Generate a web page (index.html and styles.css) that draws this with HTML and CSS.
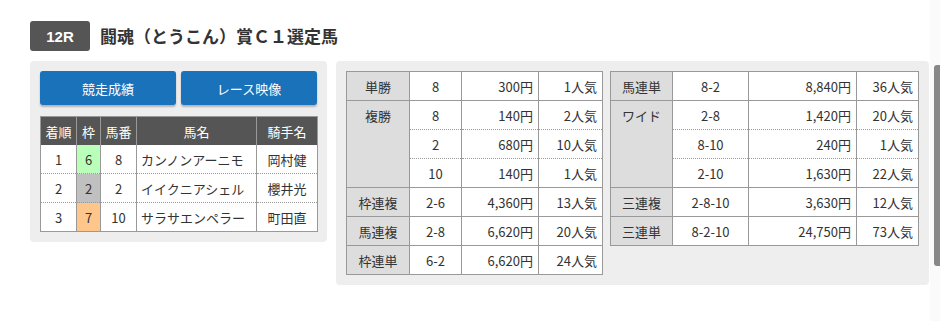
FILE: index.html
```html
<!DOCTYPE html>
<html lang="ja">
<head>
<meta charset="utf-8">
<link rel="stylesheet" href="styles.css">
</head>
<body>
<div class="page">
  <div class="race-head">
    <span class="race-no">12R</span>
    <h1 class="race-title">闘魂（とうこん）賞Ｃ１選定馬</h1>
  </div>
  <div class="panels">
    <section class="panel panel-left">
      <div class="btns">
        <a class="btn">競走成績</a>
        <a class="btn">レース映像</a>
      </div>
      <table class="result">
        <colgroup><col class="c1"><col class="c2"><col class="c3"><col class="c4"><col class="c5"></colgroup>
        <thead>
          <tr><th>着順</th><th>枠</th><th>馬番</th><th>馬名</th><th>騎手名</th></tr>
        </thead>
        <tbody>
          <tr><td class="ctr">1</td><td class="ctr w6">6</td><td class="ctr">8</td><td class="name">カンノンアーニモ</td><td class="ctr">岡村健</td></tr>
          <tr><td class="ctr">2</td><td class="ctr w2">2</td><td class="ctr">2</td><td class="name">イイクニアシェル</td><td class="ctr">櫻井光</td></tr>
          <tr><td class="ctr">3</td><td class="ctr w7">7</td><td class="ctr">10</td><td class="name">サラサエンペラー</td><td class="ctr">町田直</td></tr>
        </tbody>
      </table>
    </section>
    <section class="panel panel-right">
      <table class="pay pay-a">
        <colgroup><col class="a1"><col class="a2"><col class="a3"><col class="a4"></colgroup>
        <tbody>
          <tr class="grp"><th>単勝</th><td class="ctr">8</td><td class="num">300円</td><td class="num">1人気</td></tr>
          <tr class="grp"><th rowspan="3" class="top">複勝</th><td class="ctr">8</td><td class="num">140円</td><td class="num">2人気</td></tr>
          <tr class="sub"><td class="ctr">2</td><td class="num">680円</td><td class="num">10人気</td></tr>
          <tr class="sub"><td class="ctr">10</td><td class="num">140円</td><td class="num">1人気</td></tr>
          <tr class="grp"><th>枠連複</th><td class="ctr">2-6</td><td class="num">4,360円</td><td class="num">13人気</td></tr>
          <tr class="grp"><th>馬連複</th><td class="ctr">2-8</td><td class="num">6,620円</td><td class="num">20人気</td></tr>
          <tr class="grp"><th>枠連単</th><td class="ctr">6-2</td><td class="num">6,620円</td><td class="num">24人気</td></tr>
        </tbody>
      </table>
      <table class="pay pay-b">
        <colgroup><col class="b1"><col class="b2"><col class="b3"><col class="b4"></colgroup>
        <tbody>
          <tr class="grp"><th>馬連単</th><td class="ctr">8-2</td><td class="num">8,840円</td><td class="num">36人気</td></tr>
          <tr class="grp"><th rowspan="3" class="top">ワイド</th><td class="ctr">2-8</td><td class="num">1,420円</td><td class="num">20人気</td></tr>
          <tr class="sub"><td class="ctr">8-10</td><td class="num">240円</td><td class="num">1人気</td></tr>
          <tr class="sub"><td class="ctr">2-10</td><td class="num">1,630円</td><td class="num">22人気</td></tr>
          <tr class="grp"><th>三連複</th><td class="ctr">2-8-10</td><td class="num">3,630円</td><td class="num">12人気</td></tr>
          <tr class="grp"><th>三連単</th><td class="ctr">8-2-10</td><td class="num">24,750円</td><td class="num">73人気</td></tr>
        </tbody>
      </table>
    </section>
  </div>
</div>
<div class="scroll-track"><div class="scroll-thumb"></div></div>
</body>
</html>
```

FILE: styles.css
```css
html, body {
  margin: 0;
  padding: 0;
  background: #fff;
}
body {
  font-family: "Noto Sans CJK JP", "Noto Sans", sans-serif;
  color: #333;
  font-size: 13px;
}
.page {
  padding: 21px 0 0 30px;
}
.race-head {
  display: flex;
  align-items: center;
  height: 30px;
  gap: 10px;
}
.race-no {
  display: flex;
  align-items: center;
  justify-content: center;
  width: 60px;
  height: 30px;
  background: #555;
  color: #fff;
  border-radius: 3px;
  font-family: "Liberation Sans", sans-serif;
  font-weight: bold;
  font-size: 15px;
}
.race-title {
  margin: 0;
  font-size: 17px;
  font-weight: bold;
  color: #333;
  line-height: 30px;
}
.panels {
  display: flex;
  align-items: flex-start;
  gap: 9px;
  margin-top: 10px;
}
.panel {
  background: #eee;
  border-radius: 4px;
  padding: 10px;
}
.panel-left {
  width: 277px;
  padding-bottom: 10px;
}
.btns {
  display: flex;
  gap: 5px;
}
.btn {
  flex: 1;
  height: 34px;
  display: flex;
  align-items: center;
  justify-content: center;
  background: #1a72bb;
  color: #fff;
  border-radius: 3px;
  box-shadow: 0 2px 2px rgba(0,0,0,0.25);
  font-size: 13px;
}
table {
  border-collapse: collapse;
  table-layout: fixed;
}
.result {
  margin-top: 11px;
  width: 277px;
  background: #fff;
  border: 1px solid #999;
}
.result col.c1 { width: 36px; }
.result col.c2 { width: 24px; }
.result col.c3 { width: 36px; }
.result col.c4 { width: 120px; }
.result col.c5 { width: 61px; }
.result th {
  background: #555;
  color: #fff;
  font-weight: normal;
  height: 28px;
  padding: 0;
  border-left: 1px solid #999;
  border-right: 1px solid #999;
  text-align: center;
}
.result td {
  height: 28px;
  padding: 0;
  border: 1px solid #999;
  border-top: 1px dotted #999;
  border-bottom: 1px dotted #999;
}
.result tbody tr:first-child td { border-top: 0; }
.result tbody tr:last-child td { border-bottom: 1px solid #999; }
.ctr { text-align: center; }
.name { padding-left: 4px !important; white-space: nowrap; }
.w6 { background: #b9ffb9; }
.w2 { background: #c0c0c0; }
.w7 { background: #ffc68c; }

.panel-right {
  display: flex;
  align-items: flex-start;
  gap: 7px;
  width: 573px;
  padding-bottom: 10px;
}
.pay {
  background: #fff;
  border: 1px solid #999;
}
.pay-a { width: 257px; }
.pay-b { width: 309px; }
.pay col.a1 { width: 63px; }
.pay col.a2 { width: 52px; }
.pay col.a3 { width: 77px; }
.pay col.a4 { width: 64px; }
.pay col.b1 { width: 62px; }
.pay col.b2 { width: 76px; }
.pay col.b3 { width: 108px; }
.pay col.b4 { width: 62px; }
.pay th {
  background: #ddd;
  font-weight: normal;
  text-align: center;
  border: 1px solid #999;
  height: 28px;
  padding: 0;
  color: #333;
}
.pay th.top {
  vertical-align: top;
  padding-top: 5px;
}
.pay td {
  height: 28px;
  padding: 0;
  border-left: 1px solid #999;
  border-right: 1px solid #999;
}
.pay tr.grp td { border-top: 1px solid #999; }
.pay tr.sub td { border-top: 1px dotted #999; }
.num {
  text-align: right;
  padding-right: 5px !important;
}
.scroll-track {
  position: fixed;
  top: 0;
  right: 0;
  width: 10px;
  height: 100%;
  background: #fafafa;
}
.scroll-thumb {
  position: absolute;
  top: 65px;
  right: 0;
  width: 6px;
  height: 201px;
  background: #888;
  border-radius: 3px 0 0 3px;
}
```
